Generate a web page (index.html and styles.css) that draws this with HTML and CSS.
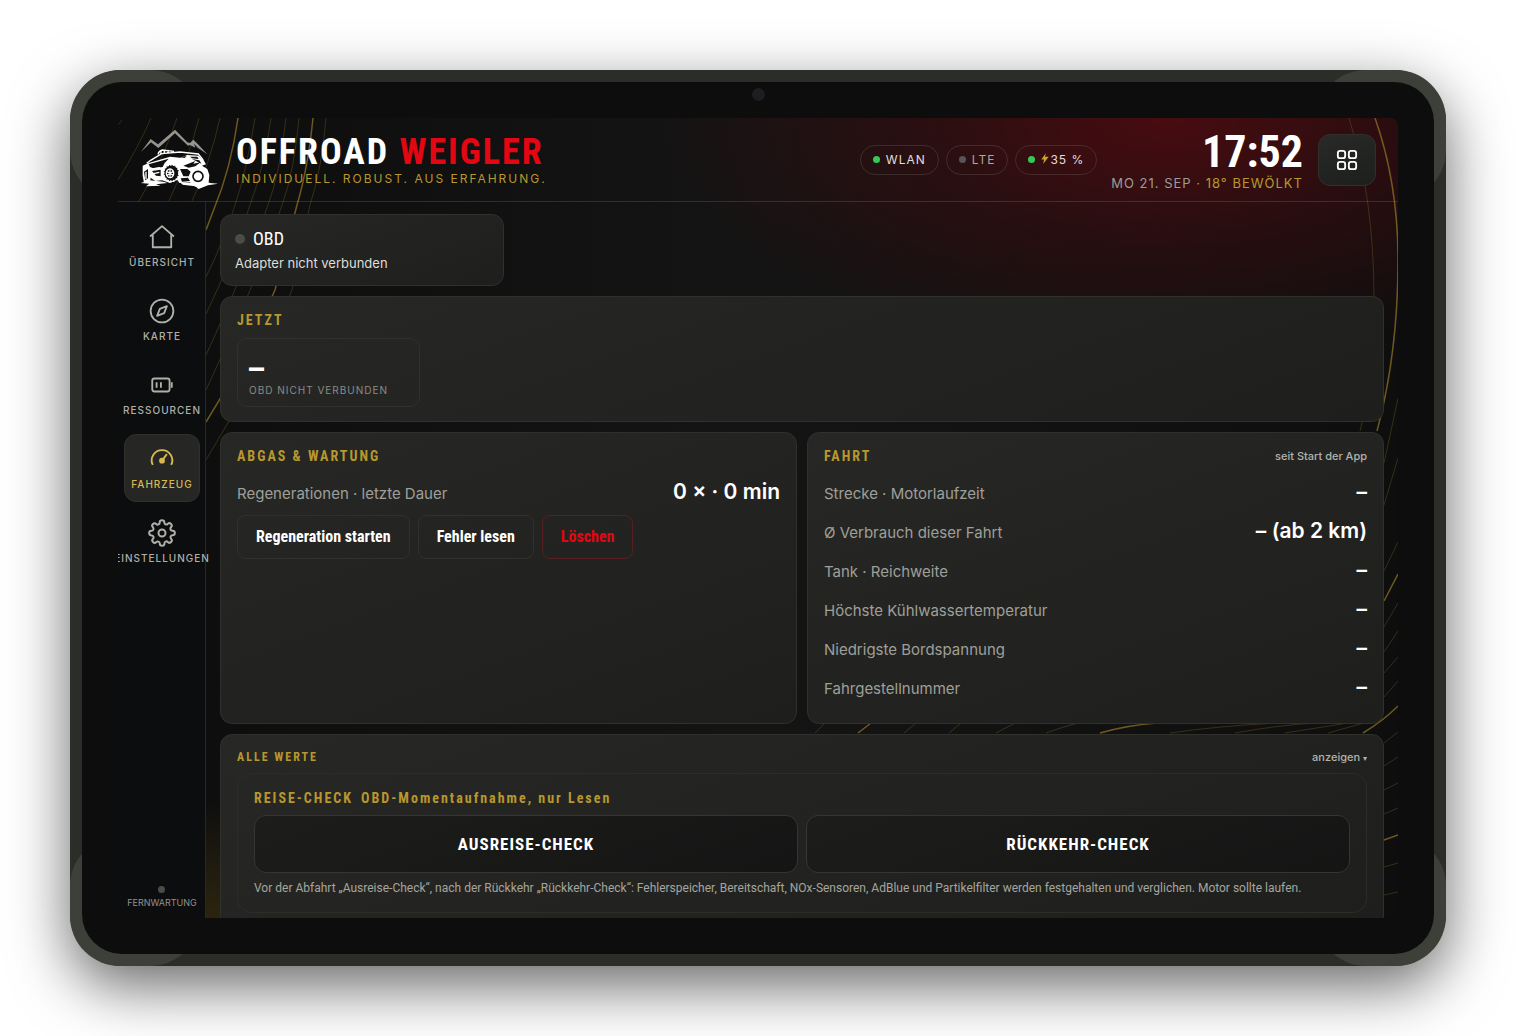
FILE: index.html
```html
<!DOCTYPE html>
<html lang="de">
<head>
<meta charset="utf-8">
<title>Offroad Weigler – Fahrzeug</title>
<link rel="stylesheet" href="styles.css">
</head>
<body>
<div class="tablet">
  <span class="bumper bumper-tl"></span><span class="bumper bumper-tr"></span>
  <span class="bumper bumper-bl"></span><span class="bumper bumper-br"></span>
  <div class="bezel">
    <span class="camera"></span>
    <div class="screen">
      <svg class="contours" viewBox="0 0 1280 800" preserveAspectRatio="none" aria-hidden="true">
        <g class="line">
          <path d="M0 7L4 2M33 0Q20 30 0 62M59 0Q46 40 21 83L0 120M81 0Q71 40 51 83M102 0Q92 45 74 83M137 0Q128 55 117 87Q105 125 88 159M153 0Q146 50 132 87Q115 140 88 196M168 0Q162 55 150 87Q128 150 88 237M181 0Q176 55 164 87Q140 160 88 272M208 0Q204 50 192 87L174 172Q145 245 111 303L88 342"/>
          <path d="M1231 0Q1256 80 1256 180Q1256 260 1242 313M1280 280L1273 313L1266 345M1280 340L1266 387M1280 424L1266 453M1280 485L1266 509M1280 513L1266 534M1280 539L1266 555M1280 563L1266 579M1280 614L1266 625M1280 639L1266 648M1280 665L1266 672M1280 690L1266 696M1280 745L1266 749M1280 774L1266 777"/>
          <path d="M707 605L697 615M798 605L786 615M843 605L831 615M897 605L878 615M960 605Q944 609 928 615M1159 605Q1100 608 1052 615M1199 605Q1160 607 1117 615M1230 605L1167 615M1246 605L1210 615"/>
        </g>
        <g class="line line-bright">
          <path d="M120 0Q113 50 96 91L88 112M195 0Q190 50 179 87L157 172Q125 245 88 304"/>
          <path d="M1257 0Q1280 65 1280 142Q1280 235 1259 313M1280 456L1266 483M1280 588Q1265 603 1245 615M753 605L740 615M1040 605Q1010 607 982 615M1280 717L1266 722"/>
        </g>
      </svg>

      <header class="topbar">
        <svg class="logo" viewBox="30 30 240 186" aria-hidden="true">
          <path class="logo-peak" d="M32 100L62 60L84 76L135 32L172 70L180 72L190 62L204 76L232 106L203 86L192 74L196 86L180 78L174 80L135 43L85 87L63 70Z"/>
          <path class="logo-rim" d="M50 133L62 124L95 104L150 99L205 105L218 121L222 133M84 106Q86 96 97 93L132 97M92 106L94 94M102 104L104 92M113 102L116 93M125 101L126 94"/>
          <path class="logo-body" d="M38 140L56 132L120 113L150 116L172 108L206 110L222 126L228 136L216 140L232 150L238 168L236 190L222 202L206 206L190 200L180 190L148 192L142 182L120 192L96 184L76 186L62 176L60 188L42 192L38 170Z"/>
          <path class="logo-cut" d="M56 136L116 119L104 132L98 144L70 148L60 144ZM148 114L170 111L164 117ZM180 113L202 113L206 120L186 118ZM160 140L196 126L190 134L212 130L196 142L176 146ZM150 150L172 150L182 158L176 172L160 172ZM66 156L92 152L92 172L78 170ZM42 158L54 150L54 178L46 184ZM152 178L174 176L180 186L156 188ZM186 120L208 124L214 134Z"/>
          <ellipse class="logo-tyre" cx="124" cy="162" rx="23" ry="25"/>
          <ellipse class="logo-rim" cx="120" cy="163" rx="11" ry="13"/>
          <path class="logo-rim" d="M120 151V175M111 158L130 169M111 169L130 157M48 158V180M66 150L90 146M70 164L88 160"/>
          <circle class="logo-ring" cx="204" cy="172" r="15"/>
          <path class="logo-body" d="M32 192L60 184L100 188L112 192L78 196L92 200L48 202L58 194ZM150 190L190 192L232 188L240 192L264 194L234 199L206 210L196 202L158 197Z"/>
        </svg>
        <div class="brand">
          <h1 class="brand-name">OFFROAD <span>WEIGLER</span></h1>
          <p class="brand-claim">INDIVIDUELL. ROBUST. AUS ERFAHRUNG.</p>
        </div>
        <div class="chips">
          <span class="chip chip-on"><i class="dot"></i>WLAN</span>
          <span class="chip"><i class="dot"></i>LTE</span>
          <span class="chip chip-on chip-power"><i class="dot"></i><span><svg class="bolt" viewBox="0 0 8 12" aria-hidden="true"><path d="M5 0L0 7H3L2 12L8 4H4Z"/></svg>35 %</span></span>
        </div>
        <div class="clock">
          <time class="clock-time">17:52</time>
          <span class="clock-date">MO 21. SEP <em>· 18° BEWÖLKT</em></span>
        </div>
        <button class="apps" type="button" aria-label="Apps">
          <svg viewBox="0 0 24 24" aria-hidden="true"><rect x="2" y="2" width="8" height="8" rx="2.500"/><rect x="14" y="2" width="8" height="8" rx="2.500"/><rect x="2" y="14" width="8" height="8" rx="2.500"/><rect x="14" y="14" width="8" height="8" rx="2.500"/></svg>
        </button>
      </header>

      <div class="body">
        <nav class="side">
          <a class="nav" href="#uebersicht"><svg viewBox="0 0 24 24"><path d="M1 11.500L12 2L23 11.500M3.500 9.500V21.500H20.500V9.500"/></svg>ÜBERSICHT</a>
          <a class="nav" href="#karte"><svg viewBox="0 0 24 24"><circle cx="12" cy="12" r="10.500"/><path d="M16.500 7.500L14 14L7.500 16.500L10 10Z"/></svg>KARTE</a>
          <a class="nav" href="#ressourcen"><svg viewBox="0 0 24 24"><rect x="3" y="6" width="16" height="12" rx="2"/><path d="M21 9.500V14.500M7 9.500V14.500M11 9.500V14.500"/></svg>RESSOURCEN</a>
          <a class="nav nav-active" href="#fahrzeug"><svg viewBox="0 0 24 24"><path d="M3.500 17.500A9.500 9.500 0 1 1 20.500 17.500M12 13.500L16.500 7.500"/><circle class="fill" cx="12" cy="13.500" r="1.800"/></svg>FAHRZEUG</a>
          <a class="nav" href="#einstellungen"><svg class="gear" viewBox="0 0 24 24"><circle cx="12" cy="12" r="3"/><path d="M19.400 15a1.650 1.650 0 0 0 .33 1.820l.06.06a2 2 0 0 1-2.830 2.830l-.06-.06a1.650 1.650 0 0 0-1.820-.33 1.650 1.650 0 0 0-1 1.510V21a2 2 0 0 1-4 0v-.09A1.650 1.650 0 0 0 9 19.400a1.650 1.650 0 0 0-1.820.33l-.06.06a2 2 0 0 1-2.830-2.830l.06-.06a1.650 1.650 0 0 0 .33-1.820 1.650 1.650 0 0 0-1.510-1H3a2 2 0 0 1 0-4h.09A1.650 1.650 0 0 0 4.600 9a1.650 1.650 0 0 0-.33-1.820l-.06-.06a2 2 0 0 1 2.830-2.830l.06.06a1.650 1.650 0 0 0 1.820.33H9a1.650 1.650 0 0 0 1-1.510V3a2 2 0 0 1 4 0v.09a1.650 1.650 0 0 0 1 1.510 1.650 1.650 0 0 0 1.820-.33l.06-.06a2 2 0 0 1 2.830 2.830l-.06.06a1.650 1.650 0 0 0-.33 1.820V9a1.650 1.650 0 0 0 1.510 1H21a2 2 0 0 1 0 4h-.09a1.650 1.650 0 0 0-1.510 1z"/></svg>EINSTELLUNGEN</a>
          <div class="remote"><i class="dot"></i>FERNWARTUNG</div>
        </nav>

        <main class="content">
          <section class="card obd">
            <h2 class="obd-title"><i class="dot"></i>OBD</h2>
            <p>Adapter nicht verbunden</p>
          </section>

          <section class="card">
            <h2 class="heading">JETZT</h2>
            <div class="tile"><b>–</b><span>OBD NICHT VERBUNDEN</span></div>
          </section>

          <div class="columns">
            <section class="card">
              <h2 class="heading">ABGAS &amp; WARTUNG</h2>
              <dl class="rows"><div><dt>Regenerationen · letzte Dauer</dt><dd>0 × · 0 min</dd></div></dl>
              <div class="actions">
                <button class="btn" type="button">Regeneration starten</button>
                <button class="btn" type="button">Fehler lesen</button>
                <button class="btn btn-danger" type="button">Löschen</button>
              </div>
            </section>
            <section class="card">
              <h2 class="heading">FAHRT <small>seit Start der App</small></h2>
              <dl class="rows">
                <div><dt>Strecke · Motorlaufzeit</dt><dd>–</dd></div>
                <div><dt>Ø Verbrauch dieser Fahrt</dt><dd>– (ab 2 km)</dd></div>
                <div><dt>Tank · Reichweite</dt><dd>–</dd></div>
                <div><dt>Höchste Kühlwassertemperatur</dt><dd>–</dd></div>
                <div><dt>Niedrigste Bordspannung</dt><dd>–</dd></div>
                <div><dt>Fahrgestellnummer</dt><dd>–</dd></div>
              </dl>
            </section>
          </div>

          <section class="card">
            <h2 class="heading heading-small">ALLE WERTE <small>anzeigen <span class="caret">▾</span></small></h2>
            <div class="check">
              <h3 class="heading check-heading">REISE-CHECK <span>OBD-Momentaufnahme, nur Lesen</span></h3>
              <div class="check-buttons">
                <button class="btn-big" type="button">AUSREISE-CHECK</button>
                <button class="btn-big" type="button">RÜCKKEHR-CHECK</button>
              </div>
              <p class="note">Vor der Abfahrt „Ausreise-Check“, nach der Rückkehr „Rückkehr-Check“: Fehlerspeicher, Bereitschaft, NOx-Sensoren, AdBlue und Partikelfilter werden festgehalten und verglichen. Motor sollte laufen.</p>
            </div>
          </section>
        </main>
      </div>
    </div>
  </div>
</div>
</body>
</html>
```
FILE: styles.css
```css
:root {
  --gold: #b8982e;
  --gold-light: #d9b94f;
  --text: #ffffff;
  --muted: #9c9c97;
  --red: #e30613;
  --edge: #30312d;
  --sans: Inter, "Noto Sans", sans-serif;
  --narrow: "Roboto Condensed", "Liberation Sans Narrow", "DejaVu Sans Condensed", sans-serif;
}
* { box-sizing: border-box; margin: 0; }
body {
  padding: 70px;
  background: #fff;
  color: var(--text);
  font: 15px/20px var(--sans);
}
button { font: inherit; color: inherit; }

.tablet {
  position: relative;
  height: calc(100vh - 140px);
  padding: 12px;
  border-radius: 52px;
  background: #2b2d28;
  box-shadow: 0 20px 60px rgba(0, 0, 0, .6);
}
.bumper {
  position: absolute;
  width: 130px;
  height: 130px;
  border-radius: 50px;
  background: #3d4038;
}
.bumper-tl { top: 0; left: 0; }
.bumper-tr { top: 0; right: 0; }
.bumper-bl { bottom: 0; left: 0; }
.bumper-br { bottom: 0; right: 0; }
.bezel {
  position: relative;
  height: 100%;
  padding: 36px;
  border-radius: 40px;
  background: #0d0d0d;
}
.camera {
  position: absolute;
  top: 6px;
  left: 50%;
  width: 13px;
  height: 13px;
  margin-left: -6px;
  border-radius: 50%;
  background: #1d1e22;
}
.screen {
  position: relative;
  display: flex;
  flex-direction: column;
  height: 100%;
  overflow: hidden;
  border-radius: 8px;
  background:
    radial-gradient(ellipse 40% 30% at 82% 0, #480c10 0, rgba(60, 12, 16, .6) 45%, rgba(30, 15, 16, 0) 100%),
    radial-gradient(ellipse 30% 17% at 4% 102%, #30280f 0, rgba(30, 25, 14, 0) 100%),
    linear-gradient(90deg, #0d0d0d, #141414 50%, #0e0e0e);
}
.contours { position: absolute; inset: 0; width: 100%; height: 100%; }
.line { fill: none; stroke: #b8982e; stroke-opacity: .24; stroke-width: 1; }
.line-bright { stroke-opacity: .55; stroke-width: 1.500; }

.topbar {
  position: relative;
  display: flex;
  flex: none;
  align-items: center;
  height: 84px;
  padding: 0 22px;
  border-bottom: 1px solid rgba(255, 255, 255, .12);
}
.logo { width: 80px; height: 62px; flex: none; }
.logo-peak { fill: #96948f; }
.logo-body { fill: #fff; }
.logo-cut { fill: #101010; }
.logo-tyre { fill: #101010; stroke: #fff; stroke-width: 5; stroke-dasharray: 6 3; }
.logo-rim { fill: none; stroke: #fff; stroke-width: 4; }
.logo-ring { fill: #fff; stroke: #101010; stroke-width: 5; }
.brand { margin-left: 16px; }
.brand-name { font: 700 36px/38px var(--narrow); letter-spacing: 2px; }
.brand-name span { color: var(--red); }
.brand-claim { color: var(--gold); font-size: 12px; line-height: 16px; letter-spacing: 2px; }
.chips { display: flex; gap: 7px; margin-left: auto; }
.chip {
  display: flex;
  align-items: center;
  gap: 6px;
  height: 30px;
  padding: 0 12px;
  border: 1px solid rgba(160, 160, 150, .2);
  border-radius: 15px;
  color: #aaa5a2;
  font-size: 12px;
  letter-spacing: 1px;
}
.chip-on { color: #e2dedb; }
.dot { width: 7px; height: 7px; border-radius: 50%; background: #555753; }
.chip-on .dot { background: #34c759; }
.bolt { width: 8px; height: 11px; margin-right: 1px; fill: #c9a12c; }
.clock { display: flex; flex-direction: column; align-items: flex-end; margin: 0 15px 0 14px; }
.clock-time { font: 700 44px/46px var(--narrow); }
.clock-date { color: var(--muted); font-size: 13px; line-height: 16px; letter-spacing: 1px; }
.clock-date em { color: var(--gold); font-style: normal; }
.apps {
  display: grid;
  place-items: center;
  width: 58px;
  height: 52px;
  border: 1px solid var(--edge);
  border-radius: 12px;
  background: linear-gradient(160deg, #292a27, #1d1f1c);
}
.apps svg { width: 22px; fill: none; stroke: #fff; stroke-width: 2; }

.body { position: relative; display: flex; flex: 1; min-height: 0; }
.side {
  display: flex;
  flex: none;
  flex-direction: column;
  align-items: center;
  gap: 6px;
  width: 88px;
  padding: 10px 5px 9px 6px;
  border-right: 1px solid #26272a;
  background: #0c0d0f;
}
.nav {
  display: flex;
  flex-direction: column;
  align-items: center;
  gap: 4px;
  width: 76px;
  height: 68px;
  padding-top: 11px;
  border: 1px solid transparent;
  border-radius: 12px;
  color: #b0b0a9;
  font-size: 10px;
  font-weight: 500;
  line-height: 16px;
  letter-spacing: 1px;
  text-decoration: none;
}
.nav svg { width: 26px; height: 26px; flex: none; fill: none; stroke: currentColor; stroke-width: 1.700; stroke-linejoin: round; }
.nav .gear { width: 28px; height: 28px; margin: -1px; }
.nav .fill { fill: currentColor; }
.nav-active { border-color: var(--edge); background: #262724; color: var(--gold-light); }
.remote {
  display: flex;
  flex-direction: column;
  align-items: center;
  gap: 4px;
  margin-top: auto;
  color: #92928d;
  font-size: 9px;
  line-height: 12px;
}

.content {
  display: flex;
  flex: 1;
  flex-direction: column;
  gap: 10px;
  min-width: 0;
  padding: 12px 14px 0;
  overflow: hidden;
}
.card {
  flex: none;
  padding: 15px 16px 14px;
  border: 1px solid var(--edge);
  border-radius: 12px;
  background: linear-gradient(160deg, #272826, #1e1f1c);
}
.obd { width: 284px; padding: 14px 14px 12px; color: #dededa; font-size: 13px; }
.obd-title { display: flex; align-items: center; gap: 8px; margin-bottom: 4px; color: #fff; font: 400 18px/20px var(--narrow); }
.obd .dot, .remote .dot { background: #4b4c48; }
.obd .dot { width: 10px; height: 10px; }
.heading {
  display: flex;
  align-items: center;
  color: var(--gold);
  font: 700 14px/16px var(--narrow);
  letter-spacing: 2px;
}
.heading small { margin-left: auto; color: #b3b3ad; font: 500 11px/16px var(--sans); letter-spacing: 0; }
.heading-small { height: 14px; font-size: 12px; }
.caret { font-size: 8px; }
.tile {
  display: flex;
  flex-direction: column;
  width: 183px;
  margin-top: 10px;
  padding: 14px 11px 7px;
  border: 1px solid var(--edge);
  border-radius: 10px;
}
.tile b { font-size: 30px; line-height: 28px; }
.tile span { color: #8b8b86; font-size: 10px; line-height: 18px; letter-spacing: 1px; }
.columns { display: grid; grid-template-columns: 1fr 1fr; gap: 10px; flex: none; }
.columns .card { padding-bottom: 17px; }
.rows { margin-top: 8px; }
.rows div { display: flex; align-items: baseline; justify-content: space-between; height: 39px; line-height: 39px; }
.rows dt { color: #9f9f99; }
.rows dd { margin: 0; font-size: 21px; font-weight: 600; }
.actions { display: flex; gap: 8px; margin-top: 4px; }
.btn {
  height: 44px;
  padding: 0 18px;
  border: 1px solid var(--edge);
  border-radius: 8px;
  background: none;
  font: 700 16px/20px var(--narrow);
}
.btn-danger { border-color: #55201f; color: #e30613; }
.check { margin-top: 9px; padding: 16px; border: 1px solid #2c2d29; border-radius: 14px; }
.check-heading span { margin-left: 8px; }
.check-buttons { display: grid; grid-template-columns: 1fr 1fr; gap: 8px; margin-top: 9px; }
.btn-big {
  height: 58px;
  border: 1px solid #353631;
  border-radius: 12px;
  background: linear-gradient(160deg, #1d1e1b, #141514);
  font: 700 17px/20px var(--narrow);
  letter-spacing: 1px;
}
.note { margin-top: 7px; color: #a5a59f; font: 12px/16px Roboto, sans-serif; }
```
